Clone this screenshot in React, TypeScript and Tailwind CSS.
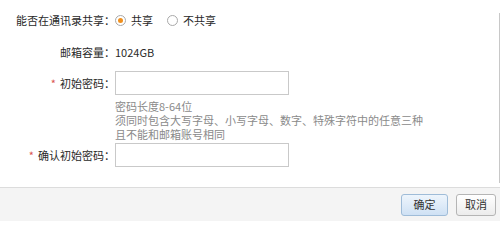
import React from "react";

function Radio({ checked, label }: { checked?: boolean; label: string }) {
  return (
    <label className="flex items-center gap-[5px]">
      <span className="flex h-[11px] w-[11px] items-center justify-center rounded-full border border-[#a9a9a9] bg-white">
        {checked && <span className="h-[5px] w-[5px] rounded-full bg-[#f0901e]" />}
      </span>
      <span>{label}</span>
    </label>
  );
}

export default function App() {
  return (
    <div
      className="flex h-[221px] w-[500px] flex-col overflow-hidden bg-white text-[11px] text-[#2a2a2a]"
      style={{ fontFamily: '"Noto Sans CJK SC", "Noto Sans", sans-serif' }}
    >
      <div className="flex h-[188px] shrink-0 border-b border-[#dcdcdc]">
        <div className="flex-1">
          <div className="mt-[10px] flex h-[20px] items-center">
            <div className="w-[115px] pl-[15px] text-right whitespace-nowrap">能否在通讯录共享：</div>
            <div className="flex items-center gap-[14px]">
              <Radio checked label="共享" />
              <Radio label="不共享" />
            </div>
          </div>
          <div className="mt-[12px] flex h-[20px] items-center">
            <div className="w-[115px] text-right">邮箱容量：</div>
            <div>1024GB</div>
          </div>
          <div className="mt-[9px] flex h-[24px] items-center">
            <div className="w-[115px] text-right">
              <span className="mr-[4px] text-[#d9534f]">*</span>初始密码：
            </div>
            <div className="h-[24px] w-[174px] border border-[#c9c9c9] bg-white" />
          </div>
          <div className="mt-[4px] pl-[115px] text-[#8a8a8a]">
            <div className="h-[14px] leading-[14px]">密码长度8-64位</div>
            <div className="h-[14px] leading-[14px]">须同时包含大写字母、小写字母、数字、特殊字符中的任意三种</div>
            <div className="h-[14px] leading-[14px]">且不能和邮箱账号相同</div>
          </div>
          <div className="mt-[2px] flex h-[24px] items-center">
            <div className="w-[115px] text-right">
              <span className="mr-[4px] text-[#d9534f]">*</span>确认初始密码：
            </div>
            <div className="h-[24px] w-[174px] border border-[#c9c9c9] bg-white" />
          </div>
        </div>
        <div className="mt-[13px] h-[170px] w-px bg-[#c8c8c8]" />
      </div>
      <div className="flex flex-1 items-center justify-end gap-[8px] bg-[#f4f4f4] pr-[4px]">
        <button className="h-[22px] w-[47px] rounded-[3px] border border-[#9fbcd8] bg-gradient-to-b from-[#eef5fc] to-[#cfe1f4] text-[11px] text-[#333]">
          确定
        </button>
        <button className="h-[22px] w-[40px] rounded-[3px] border border-[#b5b5b5] bg-gradient-to-b from-[#ffffff] to-[#ececec] text-[11px] text-[#333]">
          取消
        </button>
      </div>
    </div>
  );
}
